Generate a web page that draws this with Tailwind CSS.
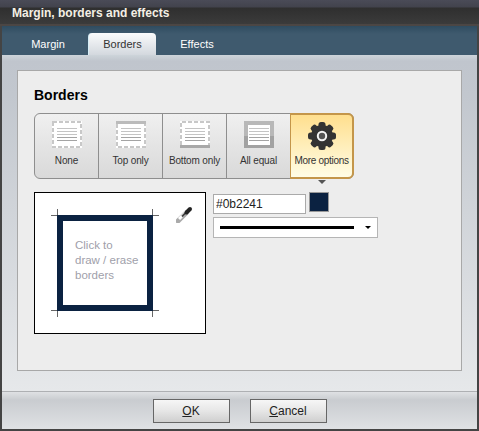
<!DOCTYPE html>
<html lang="en">
<head>
  <meta charset="UTF-8" />
  <title>Margin, borders and effects</title>
  <script src="https://cdn.jsdelivr.net/npm/@tailwindcss/browser@4"></script>
</head>
<body class="w-[479px] h-[431px] overflow-hidden bg-[#444] font-['Liberation_Sans',Arial,sans-serif] text-[11px] text-[#222]">
  <div class="flex flex-col h-full border-x-2 border-b-2 border-[#444]">
    <!-- Title bar -->
    <div class="h-[26px] -mx-[2px] shrink-0 flex items-center pl-[12px] pt-[2px] border-b-2 border-[#4b4644] bg-[linear-gradient(to_bottom,#4a4b57_0,#42434d_7px,#2f2f2f_8px,#3b3b3b_24px)]">
      <span class="text-[12px] font-bold text-[#f4efe4]">Margin, borders and effects</span>
    </div>
    <!-- Tabs -->
    <div class="h-[29px] shrink-0 flex items-end pl-[11px] bg-[linear-gradient(to_bottom,#2f4c60,#3f5a6e_8px,#3f5a6e)]">
      <div class="w-[70px] h-[22px] mr-[5px] flex items-center justify-center text-white">Margin</div>
      <div class="w-[68px] h-[22px] flex items-center justify-center rounded-t-[4px] border-l border-[#d5edf5] bg-[linear-gradient(to_bottom,#fafbfc,#d3d8de)] text-[#333]">Borders</div>
      <div class="w-[82px] h-[22px] flex items-center justify-center text-white">Effects</div>
    </div>
    <!-- Content -->
    <div class="flex-1 pt-[15px] px-[15px] bg-[linear-gradient(to_bottom,#cdd4da,#c0c5cd_6px,#c2c7ce_40px,#e6e8ea)]">
      <div class="w-[445px] h-[301px] border border-[#a8a8a8] bg-[#ededed] pl-[16px] pt-[16px]">
        <h2 class="text-[14px] leading-[16px] font-bold text-black">Borders</h2>
        <!-- Border presets -->
        <div class="mt-[10px] flex w-[320px] h-[66px] rounded-[6px] border border-[#8e8e8e] bg-[linear-gradient(to_bottom,#f0f0f0,#e4e4e4_50%,#d9d9d9)]">
          <div class="w-[64px] shrink-0 flex flex-col items-center pt-[7px] border-r border-[#8e8e8e]">
            <svg width="30" height="27" viewBox="0 0 30 27"><rect width="30" height="27" fill="#fff"/><rect x="1" y="1" width="28" height="25" fill="none" stroke="#c8c8c8" stroke-width="2" stroke-dasharray="4 2"/><path d="M5 7.500h20M5 10.500h20M5 13.500h20" stroke="#c4c4c4"/><path d="M5 16.500h20M5 19.500h20" stroke="#a4a4a4"/></svg>
            <span class="mt-[5px] text-[#333] text-[10px] tracking-[-0.15px]">None</span>
          </div>
          <div class="w-[64px] shrink-0 flex flex-col items-center pt-[7px] border-r border-[#8e8e8e]">
            <svg width="30" height="27" viewBox="0 0 30 27"><rect width="30" height="27" fill="#fff"/><path d="M1 3v23h28V3" fill="none" stroke="#c8c8c8" stroke-width="2" stroke-dasharray="4 2"/><rect width="30" height="3" fill="#bbb"/><path d="M5 7.500h20M5 10.500h20M5 13.500h20" stroke="#c4c4c4"/><path d="M5 16.500h20M5 19.500h20" stroke="#a4a4a4"/></svg>
            <span class="mt-[5px] text-[#333] text-[10px] tracking-[-0.15px]">Top only</span>
          </div>
          <div class="w-[64px] shrink-0 flex flex-col items-center pt-[7px] border-r border-[#8e8e8e]">
            <svg width="30" height="27" viewBox="0 0 30 27"><rect width="30" height="27" fill="#fff"/><path d="M1 24V1h28v23" fill="none" stroke="#c8c8c8" stroke-width="2" stroke-dasharray="4 2"/><rect y="24" width="30" height="3" fill="#a8a8a8"/><path d="M5 7.500h20M5 10.500h20M5 13.500h20" stroke="#c4c4c4"/><path d="M5 16.500h20M5 19.500h20" stroke="#a4a4a4"/></svg>
            <span class="mt-[5px] text-[#333] text-[10px] tracking-[-0.15px] whitespace-nowrap">Bottom only</span>
          </div>
          <div class="w-[63px] shrink-0 flex flex-col items-center pt-[7px]">
            <svg width="30" height="27" viewBox="0 0 30 27"><rect width="30" height="15" fill="#b8b8b8"/><rect y="15" width="30" height="12" fill="#a2a2a2"/><rect x="4" y="4" width="22" height="20" fill="#fff"/><path d="M5 7.500h20M5 10.500h20M5 13.500h20" stroke="#c4c4c4"/><path d="M5 16.500h20M5 19.500h20" stroke="#a4a4a4"/></svg>
            <span class="mt-[5px] text-[#333] text-[10px] tracking-[-0.15px] whitespace-nowrap">All equal</span>
          </div>
          <div class="relative w-[64px] shrink-0 -my-px -mr-px flex flex-col items-center pt-[7px] rounded-r-[6px] border-2 border-l border-[#c4964a] bg-[linear-gradient(to_bottom,#ffdf8e,#fffde6)]">
            <svg width="30" height="28" viewBox="0 0 30 28">
              <g fill="#333">
                <circle cx="15" cy="14" r="11"/>
                <rect x="11.500" y="0" width="7" height="28" rx="2.500"/>
                <rect x="11.500" y="0" width="7" height="28" rx="2.500" transform="rotate(45 15 14)"/>
                <rect x="11.500" y="0" width="7" height="28" rx="2.500" transform="rotate(90 15 14)"/>
                <rect x="11.500" y="0" width="7" height="28" rx="2.500" transform="rotate(135 15 14)"/>
              </g>
              <circle cx="15" cy="14" r="4.200" fill="#555" stroke="#f4f4f4" stroke-width="2"/>
            </svg>
            <span class="mt-[3px] text-[#333] text-[10px] tracking-[-0.3px] whitespace-nowrap">More options</span>
            <div class="absolute left-1/2 -translate-x-1/2 -bottom-[7px] w-0 h-0 border-x-[4px] border-x-transparent border-t-[4px] border-t-[#555]"></div>
          </div>
        </div>
        <!-- Border editor -->
        <div class="mt-[13px] flex">
          <div class="relative w-[172px] h-[142px] border border-black bg-white shrink-0">
            <div class="absolute left-[22px] top-[22px] w-[96px] h-[96px] border-[6px] border-[#0b2241] pl-[12px] pt-[17px] text-[11.500px] leading-[15px] text-[#a0a0aa] whitespace-nowrap">Click to<br />draw / erase<br />borders</div>
            <svg class="absolute left-[16px] top-[16px]" width="108" height="108" viewBox="0 0 108 108"><path d="M6.500 0v6M0 6.500h6M101.500 0v6M102 6.500h6M6.500 102v6M0 101.500h6M101.500 102v6M102 101.500h6" stroke="#666"/></svg>
            <svg class="absolute left-[141px] top-[13px]" width="17" height="17" viewBox="0 0 17 17">
              <path d="M2 15L10 7" stroke="#aaa" stroke-width="5" stroke-linecap="round"/>
              <path d="M3 13L10 6" stroke="#fff" stroke-width="3"/>
              <path d="M6 10.500L11 5.500" stroke="#444" stroke-width="2"/>
              <path d="M10.500 6.500L14 3" stroke="#222" stroke-width="4" stroke-linecap="round"/>
            </svg>
          </div>
          <div class="ml-[7px] w-[165px]">
            <div class="flex items-start">
              <input value="#0b2241" class="w-[93px] h-[20px] mt-[2px] px-[2px] border border-[#aaa] bg-white text-[12px] text-[#222] outline-none" />
              <div class="ml-[3px] w-[20px] h-[20px] border border-[#999] bg-[#0b2241]"></div>
            </div>
            <div class="mt-[3px] h-[21px] border border-[#b5b5b5] bg-white flex items-center pl-[6px] pr-[6px]">
              <div class="w-[134px] h-[3px] bg-black"></div>
              <div class="ml-auto w-0 h-0 border-x-[3px] border-x-transparent border-t-[3px] border-t-black"></div>
            </div>
          </div>
        </div>
      </div>
    </div>
    <!-- Footer -->
    <div class="h-[38px] shrink-0 flex justify-center gap-[20px] pt-[7px] border-t border-[#aeb0b3] bg-[linear-gradient(to_bottom,#dfe1e4,#c9ccd0_8px,#dfe1e4)]">
      <button class="w-[77px] h-[24px] border border-[#666] bg-[linear-gradient(to_bottom,#f6f6f6,#e8e8e8_45%,#cfcfcf)] text-[12px] text-[#222]"><span class="underline">O</span>K</button>
      <button class="w-[77px] h-[24px] border border-[#666] bg-[linear-gradient(to_bottom,#f6f6f6,#e8e8e8_45%,#cfcfcf)] text-[12px] text-[#222]"><span class="underline">C</span>ancel</button>
    </div>
  </div>
</body>
</html>
